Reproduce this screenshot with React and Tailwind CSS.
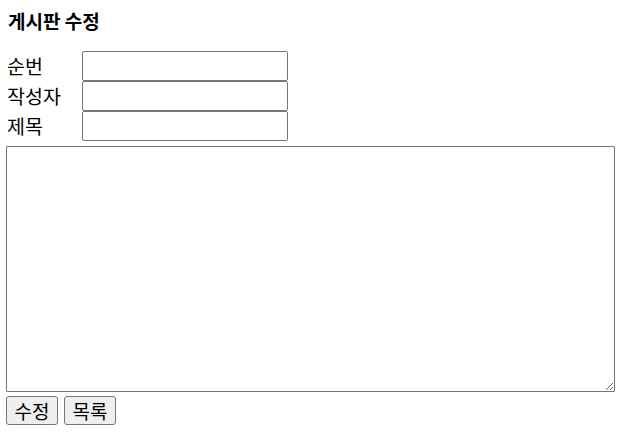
export default function App() {
  const rows = ['순번', '작성자', '제목']

  return (
    <div className="min-h-screen bg-white px-[6px] pt-[10px] text-black font-['Malgun_Gothic','Noto_Sans_CJK_KR',sans-serif]">
      <h1 className="pl-[2px] text-[19px] font-bold leading-[22px] mb-[19px]">게시판 수정</h1>
      <div className="flex flex-col">
        {rows.map((label) => (
          <div key={label} className="flex h-[30px] items-center">
            <span className="w-[76px] pl-[1px] text-[19.5px] leading-[30px]">{label}</span>
            <input
              type="text"
              className="h-[30px] w-[206px] rounded-[2px] border border-[#767676] bg-white px-[3px] outline-none"
            />
          </div>
        ))}
      </div>
      <textarea className="mt-[5px] block h-[246px] w-[609px] rounded-[1px] border border-[#767676] bg-white outline-none" />
      <div className="mt-[4px] flex gap-[6px]">
        <button className="h-[29px] w-[52px] rounded-[3px] border border-[#767676] bg-[#efefef] text-[19px] leading-none">수정</button>
        <button className="h-[29px] w-[52px] rounded-[3px] border border-[#767676] bg-[#efefef] text-[19px] leading-none">목록</button>
      </div>
    </div>
  )
}
